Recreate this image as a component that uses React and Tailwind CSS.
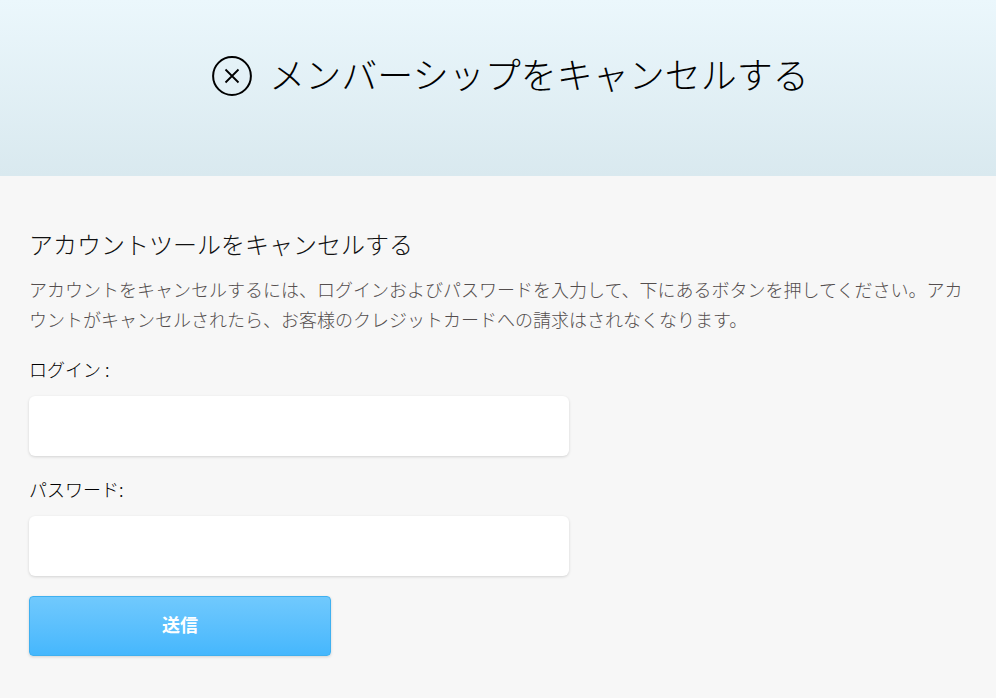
export default function App() {
  const f = { fontFamily: '"Noto Sans CJK JP", "Noto Sans", sans-serif' };
  return (
    <div className="min-h-[698px] bg-[#f7f7f7]" style={f}>
      <header className="h-[176px] bg-gradient-to-b from-[#ebf7fc] to-[#d9e9ef] flex items-center justify-center pb-[31px] pl-[25px] gap-[17px]">
        <svg width="40" height="40" viewBox="0 0 40 40" fill="none" stroke="#000" strokeWidth="2" className="shrink-0 mt-[7px]">
          <circle cx="20" cy="20" r="18.9" />
          <path d="M13.5 13.5l13 13M26.5 13.5l-13 13" strokeWidth="1.8" />
        </svg>
        <h1 className="text-[36px] leading-[44px] text-black font-light">メンバーシップをキャンセルする</h1>
      </header>
      <main className="px-[29px] pt-[51px]">
        <h2 className="text-[24px] leading-[34px] text-[#111] font-light">アカウントツールをキャンセルする</h2>
        <p className="mt-[13px] text-[18px] leading-[30px] text-[#544e4e] font-light">アカウントをキャンセルするには、ログインおよびパスワードを入力して、下にあるボタンを押してください。アカウントがキャンセルされたら、お客様のクレジットカードへの請求はされなくなります。</p>
        <label className="block mt-[20px] text-[18px] leading-[30px] text-black font-light">ログイン :</label>
        <input className="block mt-[12px] w-[540px] h-[60px] bg-white rounded-[6px] shadow-[0_1px_3px_rgba(0,0,0,0.15)]" />
        <label className="block mt-[18px] text-[18px] leading-[30px] text-black font-light">パスワード:</label>
        <input type="password" className="block mt-[12px] w-[540px] h-[60px] bg-white rounded-[6px] shadow-[0_1px_3px_rgba(0,0,0,0.15)]" />
        <button className="block mt-[20px] w-[302px] h-[60px] pb-[3px] rounded-[4px] border border-[#3fb0f0] bg-gradient-to-b from-[#70c9fd] to-[#45b7fd] text-white text-[18px] font-bold shadow-[0_1px_3px_rgba(0,0,0,0.15)]">送信</button>
      </main>
    </div>
  );
}
